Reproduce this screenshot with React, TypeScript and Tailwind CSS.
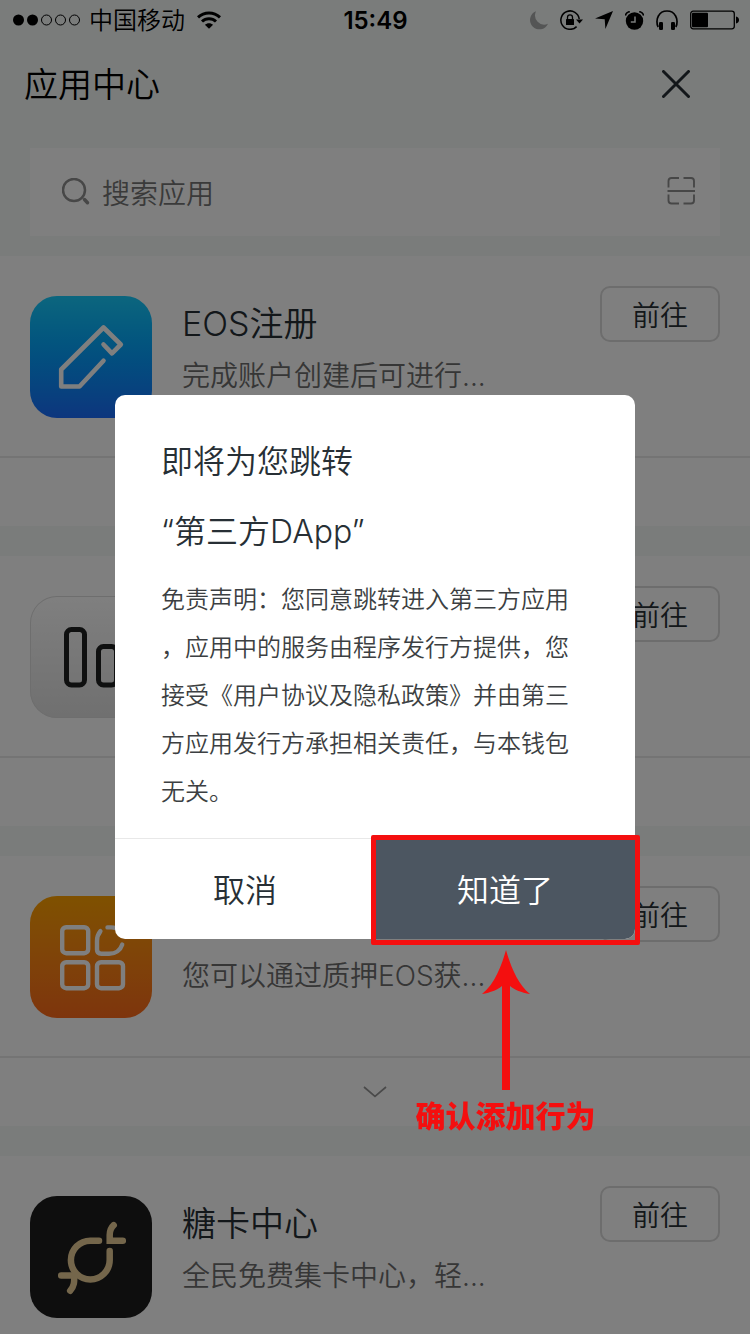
import type { ReactNode } from "react";

type AppEntry = {
  id: string;
  title?: string;
  summary?: string;
  icon: ReactNode;
};

function PencilIcon() {
  return (
    <svg viewBox="0 0 122 122" className="size-full" fill="none" stroke="#fff" strokeWidth="4.6" strokeLinecap="round" strokeLinejoin="round" aria-hidden="true">
      <path d="M73.5 48.5 82 57.3 90.8 48.5 73.5 31.5 31.2 73.5V90.5H49.5L73.5 64.8" />
    </svg>
  );
}

function BarsIcon() {
  return (
    <svg viewBox="0 0 122 122" className="size-full" fill="none" stroke="#1f2020" strokeWidth="5" aria-hidden="true">
      <rect x="36.5" y="33.5" width="18" height="55.5" rx="5" />
      <rect x="68.5" y="50.5" width="18" height="38.5" rx="5" />
    </svg>
  );
}

function GridIcon() {
  return (
    <svg viewBox="0 0 122 122" className="size-full" fill="none" stroke="#fff" strokeWidth="4.4" strokeLinecap="round" aria-hidden="true">
      <rect x="32.2" y="31.2" width="26" height="26" rx="4" />
      <rect x="32.2" y="66.2" width="26" height="26" rx="4" />
      <rect x="67" y="66.2" width="26" height="26" rx="4" />
      <path d="M70.4 35.2C68 38 67 41.500 67 45V53.500Q67 57.800 71.300 57.800H79C85.500 57.800 90.500 54 92.200 48.600" />
      <path d="M77.500 31.400H81C85 31.400 88 33 90 35.500" />
    </svg>
  );
}

function CandyIcon() {
  return (
    <svg viewBox="0 0 122 122" className="size-full" fill="none" stroke="#e8cc96" strokeWidth="6.5" strokeLinecap="round" aria-hidden="true">
      <path d="M69 44.700H60.300A19.400 19.400 0 1 0 79.700 64.100V55" />
      <path d="M83.700 29.200C80.500 32.200 79.700 35.500 79.700 39V44.700H92.800" />
      <path d="M31.200 79.500H44.300C44.300 86 44.300 90.500 40.200 94.700" />
    </svg>
  );
}

const entries: AppEntry[] = [
  {
    id: "register",
    title: "EOS注册",
    summary: "完成账户创建后可进行...",
    icon: (
      <div className="size-[122px] overflow-hidden rounded-[27px] bg-linear-to-b from-[#18ccfc] to-[#1a6cfc]">
        <PencilIcon />
      </div>
    ),
  },
  {
    id: "bars",
    icon: (
      <div className="relative size-[122px] overflow-hidden rounded-[27px] bg-linear-to-b from-white to-[#e0e0e0] ring-1 ring-[#dcdcdc] ring-inset">
        <BarsIcon />
      </div>
    ),
  },
  {
    id: "grid",
    summary: "您可以通过质押EOS获...",
    icon: (
      <div className="size-[122px] overflow-hidden rounded-[27px] bg-linear-to-b from-[#ffa200] to-[#fc6a1a]">
        <GridIcon />
      </div>
    ),
  },
  {
    id: "candy",
    title: "糖卡中心",
    summary: "全民免费集卡中心，轻...",
    icon: (
      <div className="size-[122px] overflow-hidden rounded-[27px] bg-[#1c1c1c]">
        <CandyIcon />
      </div>
    ),
  },
];

function StatusBar() {
  return (
    <div className="grid h-10 grid-cols-[1fr_auto_1fr] items-center pr-[11px] pl-3 text-black">
      <div className="flex items-center">
        <svg viewBox="0 0 70 12" className="h-3 w-[70px]" fill="none" stroke="#000" aria-hidden="true">
          <circle cx="6.500" cy="6" r="5.500" fill="#000" stroke="none" />
          <circle cx="20.500" cy="6" r="5.500" fill="#000" stroke="none" />
          <circle cx="34.500" cy="6" r="5" />
          <circle cx="48.500" cy="6" r="5" />
          <circle cx="62.500" cy="6" r="5" />
        </svg>
        <span className="ml-[7px] pt-0.5 text-2xl leading-[38px] font-[350]">中国移动</span>
        <svg viewBox="0 0 24 18" className="ml-3 h-[18px] w-6" fill="none" stroke="#000" strokeWidth="3" aria-hidden="true">
          <path d="M1 6.300C7.200.4 16.800.4 23 6.300" />
          <path d="M5 10.500C9 6.800 15 6.800 19 10.500" />
          <path d="M12 17.800 7.900 13.700C10.200 11.600 13.800 11.600 16.100 13.700Z" fill="#000" stroke="none" />
        </svg>
      </div>
      <span className="pt-0.5 text-2xl leading-[38px] font-semibold">15:49</span>
      <div className="flex items-center justify-end gap-3">
        <svg viewBox="0 0 18 19" className="h-[19px] w-[18px]" fill="#a9abaa" aria-hidden="true">
          <path d="M6 .2A9.400 9.400 0 1 0 18 12.800 9.300 9.300 0 0 1 6 .2Z" />
        </svg>
        <svg viewBox="0 0 23 20" className="h-5 w-[23px]" fill="none" stroke="#000" aria-hidden="true">
          <path d="M19.200 9A9.200 9.200 0 1 0 16.600 16.600" strokeWidth="1.500" />
          <path d="M16 9.500H23L19.500 13.500Z" fill="#000" stroke="none" />
          <rect x="6" y="9" width="8" height="6" rx=".6" fill="#000" stroke="none" />
          <path d="M7.500 9.500V7.300a2.500 2.500 0 0 1 5 0V9.500" strokeWidth="1.300" />
        </svg>
        <svg viewBox="0 0 18 18" className="size-[18px]" fill="#000" aria-hidden="true">
          <path d="M18 0 10.400 18 9.700 8.300 0 7.600Z" />
        </svg>
        <svg viewBox="0 0 19 19" className="size-[19px]" fill="#000" aria-hidden="true">
          <circle cx="9.500" cy="10" r="8.700" />
          <path d="M.4 4.600C.8 2.500 2.500.9 4.800.6M18.600 4.600C18.200 2.500 16.500.9 14.200.6" fill="none" stroke="#000" strokeWidth="1.600" />
          <path d="M10 5.500V11H5.800" fill="none" stroke="#f4f8f7" strokeWidth="1.500" />
        </svg>
        <svg viewBox="0 0 22 20" className="h-5 w-[22px]" fill="none" stroke="#000" strokeWidth="1.700" aria-hidden="true">
          <path d="M2.200 17C.4 14 .6 9 2.500 5.800 4 2.900 7 1 11 1s7 1.900 8.500 4.800C21.400 9 21.600 14 19.800 17" />
          <rect x="3" y="12" width="4" height="8" rx="1.300" fill="#000" stroke="none" />
          <rect x="15" y="12" width="4" height="8" rx="1.300" fill="#000" stroke="none" />
        </svg>
        <svg viewBox="0 0 49 20" className="h-5 w-[49px]" aria-hidden="true">
          <rect x=".7" y="1.200" width="43.600" height="17.600" rx="2.500" fill="none" stroke="#000" strokeWidth="1.300" />
          <rect x="2" y="2.800" width="16" height="14.400" rx="1" fill="#000" />
          <path d="M46 6.500C48 7 49 8.300 49 10s-1 3-3 3.500Z" fill="#000" />
        </svg>
      </div>
    </div>
  );
}

function SearchBar() {
  return (
    <label className="mx-[30px] my-5 flex h-[88px] items-center bg-white pr-[25px] pl-8">
      <svg viewBox="0 0 28 28" className="size-7 shrink-0" fill="none" stroke="#8f8f8f" aria-hidden="true">
        <circle cx="12" cy="12" r="11" strokeWidth="2.500" />
        <path d="M22.500 21.500 25.500 24.700" strokeWidth="3.500" strokeLinecap="round" />
      </svg>
      <input
        type="search"
        aria-label="搜索应用"
        placeholder="搜索应用"
        className="ml-3 h-full min-w-0 flex-1 bg-transparent pt-1 text-[28px] font-[350] outline-none placeholder:text-[#747474]"
      />
      <svg viewBox="0 0 28 28" className="mb-0.5 size-7 shrink-0" fill="none" stroke="#8f8f8f" strokeWidth="1.900" aria-hidden="true">
        <path d="M1.500 10.500V4Q1.500 1 4.500 1H12M16.500 1H24Q27 1 27 4V10.500M27 17.500V23.500Q27 26.500 24 26.500H16.500M12 26.500H4.500Q1.500 26.500 1.500 23.500V17.500M.5 14H28" />
      </svg>
    </label>
  );
}

function AppCard({ entry }: { entry: AppEntry }) {
  return (
    <article className="bg-white">
      <div className="flex items-start px-[30px] pt-[30px] pb-[38px]">
        <div className="mt-2.5 shrink-0">{entry.icon}</div>
        <div className="mt-3 ml-[30px] min-w-0 flex-1">
          <h2 className="h-[52px] truncate text-[34px] leading-[52px] font-[350] text-[#272f35]">{entry.title}</h2>
          <p className="h-[52px] truncate text-[28px] leading-[52px] font-[350] text-[#6c6c6c]">{entry.summary}</p>
        </div>
        <button type="button" className="h-14 w-[120px] shrink-0 rounded-[10px] border-2 border-[#dadada] pt-1 text-[28px] font-[350] text-[#272f35]">
          前往
        </button>
      </div>
      <button type="button" aria-label="展开" className="flex h-[70px] w-full items-center justify-center border-t-2 border-[#e8e8e8]">
        <svg viewBox="0 0 24 12" className="h-3 w-6" fill="none" stroke="#949494" strokeWidth="1.700" aria-hidden="true">
          <path d="M1 1 12 10.500 23 1" />
        </svg>
      </button>
    </article>
  );
}

function Callout() {
  return (
    <div className="pointer-events-none absolute -top-1 -right-[5px] -bottom-1.5 -left-1 rounded-xs border-[5px] border-[#f40f0f]">
      <div className="absolute inset-x-0 top-full mt-2 flex flex-col items-center">
        <svg viewBox="0 0 48 142" className="h-[142px] w-12" fill="#f40f0f" aria-hidden="true">
          <path d="M24 2C28 16 35 36 48 46 39 44.500 33 42 28 38V142H20V38C15 42 9 44.500 0 46 13 36 20 16 24 2Z" />
        </svg>
        <p className="mt-1 text-3xl leading-[44px] font-black whitespace-nowrap text-[#f40f0f]">确认添加行为</p>
      </div>
    </div>
  );
}

function RedirectDialog() {
  return (
    <div className="fixed inset-0 flex items-center justify-center bg-black/50">
      <section role="dialog" aria-modal="true" aria-labelledby="redirect-title" className="w-[520px] max-w-full rounded-[10px] bg-white">
        <div className="px-[46px] pt-8 pb-[22px]">
          <h2 id="redirect-title" className="text-[32px] leading-[70px] font-[350] text-[#272f35]">
            即将为您跳转
            <br />
            “第三方DApp”
          </h2>
          <p className="mt-[9px] text-2xl leading-[48px] font-[350] text-[#3c3f42] [line-break:anywhere]">
            免责声明：您同意跳转进入第三方应用，应用中的服务由程序发行方提供，您接受《用户协议及隐私政策》并由第三方应用发行方承担相关责任，与本钱包无关。
          </p>
        </div>
        <div className="grid grid-cols-2 border-t border-[#e8e8e8] text-[32px] font-[350]">
          <button type="button" className="h-[100px] pt-1 text-[#272f35]">
            取消
          </button>
          <div className="relative">
            <button type="button" className="h-[100px] w-full rounded-br-[10px] bg-[#4c5661] pt-1 text-white">
              知道了
            </button>
            <Callout />
          </div>
        </div>
      </section>
    </div>
  );
}

export default function App() {
  return (
    <div lang="zh-CN" className="h-dvh overflow-hidden bg-[#f4f8f7] font-['Inter','Noto_Sans_CJK_SC',sans-serif]">
      <StatusBar />
      <header className="flex h-[88px] items-center justify-between pr-[60px] pl-6">
        <h1 className="text-[34px] font-[350] text-black">应用中心</h1>
        <button type="button" aria-label="关闭">
          <svg viewBox="0 0 28 28" className="size-7" stroke="#272f35" strokeWidth="3" strokeLinecap="round" aria-hidden="true">
            <path d="M1.500 1.500 26.500 26.500M26.500 1.500 1.500 26.500" />
          </svg>
        </button>
      </header>
      <SearchBar />
      <main className="flex flex-col gap-[30px]">
        {entries.map((entry) => (
          <AppCard key={entry.id} entry={entry} />
        ))}
      </main>
      <RedirectDialog />
    </div>
  );
}
